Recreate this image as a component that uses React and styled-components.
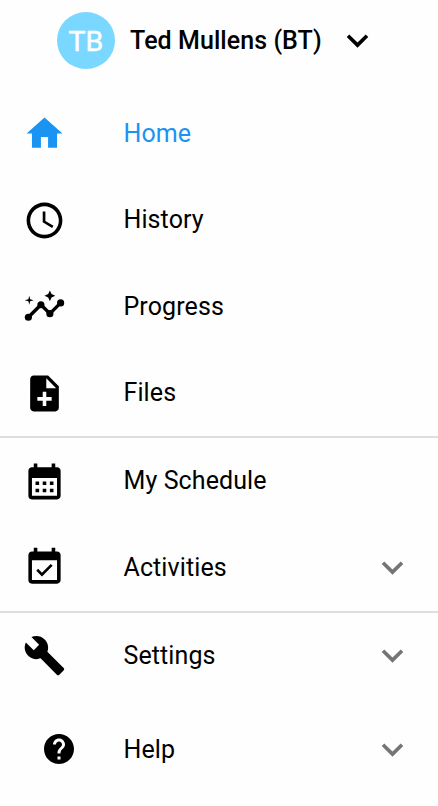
import React from "react"
import styled, { createGlobalStyle } from "styled-components"
import {
  MdAccessTime,
  MdCalendarMonth,
  MdEventAvailable,
  MdExpandMore,
  MdHelp,
  MdNoteAdd,
} from "react-icons/md"

const GlobalStyle = createGlobalStyle`
  body {
    margin: 0;
    background: #fefefe;
    color: #000;
    font-family: Roboto, sans-serif;
  }

  svg {
    display: block;
  }
`

const Drawer = styled.nav`
  width: 100%;
  height: 806px;
  overflow: hidden;
`

const Account = styled.header`
  display: flex;
  align-items: center;
  box-sizing: border-box;
  height: 90px;
  padding: 0 0 9px 57px;
`

const Avatar = styled.div`
  width: 58px;
  height: 57px;
  margin-right: 15px;
  border-radius: 50%;
  background: #7ad7ff;
  color: #fff;
  font-size: 28.5px;
  line-height: 59px;
  text-align: center;
  -webkit-text-stroke: 0.5px #fff;
`

const Name = styled.span`
  width: 206px;
  font-size: 25px;
  font-weight: 500;
  line-height: 30px;
  letter-spacing: 0.06px;
  white-space: nowrap;
`

const Section = styled.ul`
  margin: 0;
  padding: 0;
  list-style: none;

  & + & {
    border-top: 2px solid #dedede;
  }
`

const Item = styled.li`
  display: grid;
  grid-template-columns: 123.5px 1fr 43px;
  align-items: center;
  box-sizing: border-box;
  height: ${props => props.$height || 87}px;
  padding-right: 24px;
  color: ${props => (props.$active ? "#1a94f3" : "#000")};

  svg {
    margin-top: ${props => -(props.$lift || 0)}px;
  }
`

const IconSlot = styled.span`
  padding-left: ${props => (props.$inset ? 41 : 22.5)}px;
`

const Label = styled.span`
  font-size: 25px;
  line-height: 30px;
  letter-spacing: 0.1px;
`

const Chevron = styled(MdExpandMore)`
  color: #757575;
`

const HomeIcon = ({ size }) => (
  <svg width={size} height={size} viewBox="0 0 24 24" fill="currentColor">
    <path d="M10 20v-6h4v6h5v-8h3L12 3 2 12h3v8z" />
  </svg>
)

const ProgressIcon = ({ size }) => (
  <svg width={size} height={size} viewBox="0 0 24 24" fill="currentColor">
    <path d="M3 18l7-7 5 5 6-6" fill="none" stroke="currentColor" strokeWidth="1.9" />
    <circle cx="3" cy="18" r="2" />
    <circle cx="10" cy="11" r="2" />
    <circle cx="15" cy="16" r="2" />
    <circle cx="21" cy="10" r="2" />
    <path d="M15 9l.94-2.06L18 6l-2.06-.94L15 3l-.94 2.06L12 6l2.06.94z" />
    <path d="M3.5 11L4 9l2-.5L4 8l-.5-2L3 8l-2 .5L3 9z" />
  </svg>
)

const WrenchIcon = ({ size }) => (
  <svg width={size} height={size} viewBox="0 0 24 24" fill="currentColor">
    <path d="M22.7 19l-9.1-9.1c.9-2.3.4-5-1.5-6.9-2-2-5-2.4-7.4-1.3L9 6 6 9 1.6 4.7C.4 7.1.9 10.1 2.9 12.1c1.9 1.9 4.6 2.4 6.9 1.5l9.1 9.1c.4.4 1 .4 1.4 0l2.3-2.3c.5-.4.5-1.1.1-1.4z" />
  </svg>
)

const sections = [
  [
    { label: "Home", icon: HomeIcon, active: true },
    { label: "History", icon: MdAccessTime, height: 86 },
    { label: "Progress", icon: ProgressIcon },
    { label: "Files", icon: MdNoteAdd, height: 86 },
  ],
  [
    { label: "My Schedule", icon: MdCalendarMonth, height: 86 },
    { label: "Activities", icon: MdEventAvailable, expandable: true },
  ],
  [
    { label: "Settings", icon: WrenchIcon, height: 86, lift: 1, expandable: true },
    { label: "Help", icon: MdHelp, height: 101, lift: 1, inset: true, expandable: true },
  ],
]

const App = () => {
  return (
    <>
      <GlobalStyle />
      <Drawer>
        <Account>
          <Avatar>TB</Avatar>
          <Name>Ted Mullens (BT)</Name>
          <MdExpandMore size={43} />
        </Account>
        {sections.map((items, index) => (
          <Section key={index}>
            {items.map(({ label, icon: Icon, active, height, lift, inset, expandable }) => (
              <Item key={label} $active={active} $height={height} $lift={lift}>
                <IconSlot $inset={inset}>
                  <Icon size={inset ? 36 : 43} />
                </IconSlot>
                <Label>{label}</Label>
                {expandable && <Chevron size={43} />}
              </Item>
            ))}
          </Section>
        ))}
      </Drawer>
    </>
  )
}

export default App
